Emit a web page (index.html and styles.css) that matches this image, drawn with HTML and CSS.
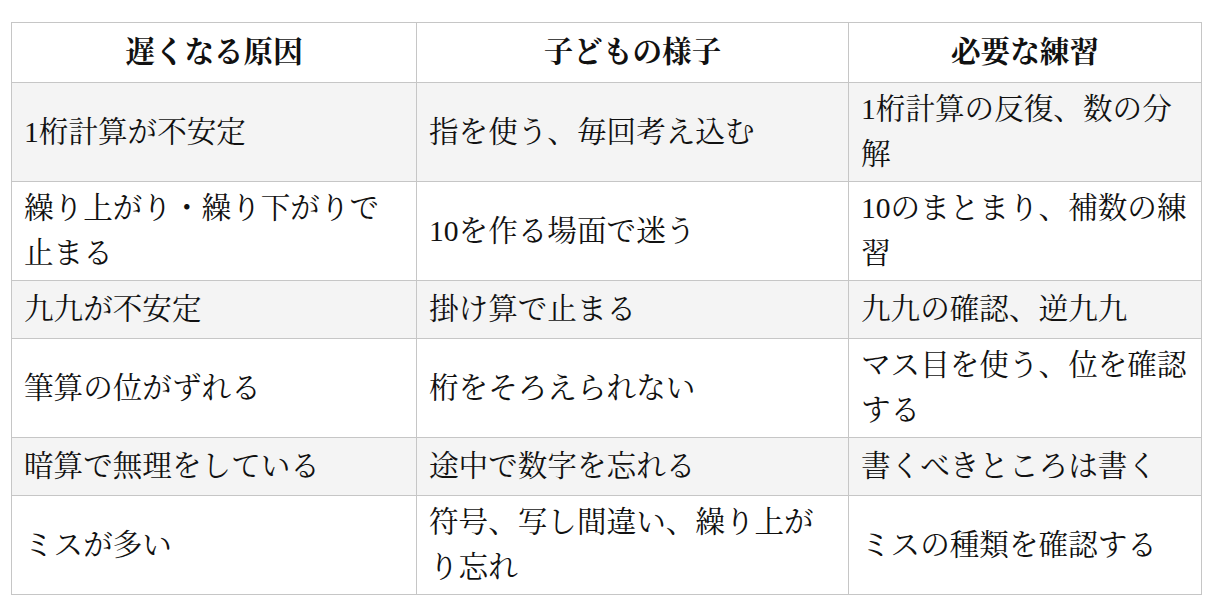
FILE: index.html
```html
<!DOCTYPE html>
<html lang="ja">
<head>
<meta charset="utf-8">
<title>計算が遅くなる原因</title>
<link rel="stylesheet" href="styles.css">
</head>
<body>
<div class="wrap">
<table class="cause-table">
  <colgroup>
    <col class="c1">
    <col class="c2">
    <col class="c3">
  </colgroup>
  <thead>
    <tr><th>遅くなる原因</th><th>子どもの様子</th><th>必要な練習</th></tr>
  </thead>
  <tbody>
    <tr><td>1桁計算が不安定</td><td>指を使う、毎回考え込む</td><td>1桁計算の反復、数の分解</td></tr>
    <tr><td>繰り上がり・繰り下がりで止まる</td><td>10を作る場面で迷う</td><td>10のまとまり、補数の練習</td></tr>
    <tr><td>九九が不安定</td><td>掛け算で止まる</td><td>九九の確認、逆九九</td></tr>
    <tr><td>筆算の位がずれる</td><td>桁をそろえられない</td><td>マス目を使う、位を確認する</td></tr>
    <tr><td>暗算で無理をしている</td><td>途中で数字を忘れる</td><td>書くべきところは書く</td></tr>
    <tr><td>ミスが多い</td><td>符号、写し間違い、繰り上がり忘れ</td><td>ミスの種類を確認する</td></tr>
  </tbody>
</table>
</div>
</body>
</html>
```
FILE: styles.css
```css
html, body {
  margin: 0;
  padding: 0;
  background: #ffffff;
}
.wrap {
  padding: 22px 0 0 11px;
}
.cause-table {
  border-collapse: collapse;
  table-layout: fixed;
  width: 1190px;
  font-family: "Liberation Serif", "Noto Serif CJK JP", "Noto Sans CJK JP", serif;
  font-size: 29.6px;
  line-height: 45px;
  color: #111111;
}
.c1 { width: 405px; }
.c2 { width: 432px; }
.c3 { width: 353px; }
.cause-table th,
.cause-table td {
  border: 1px solid #c6c6c6;
  padding: 4px 12px;
  vertical-align: middle;
  text-align: left;
}
.cause-table td {
  box-sizing: border-box;
  height: 58px;
}
.cause-table th {
  font-weight: bold;
  text-align: center;
  padding: 7px 12px;
  background: #ffffff;
}
.cause-table tbody tr:nth-child(odd) td {
  background: #f4f4f4;
}
.cause-table tbody tr:nth-child(even) td {
  background: #ffffff;
}
```
